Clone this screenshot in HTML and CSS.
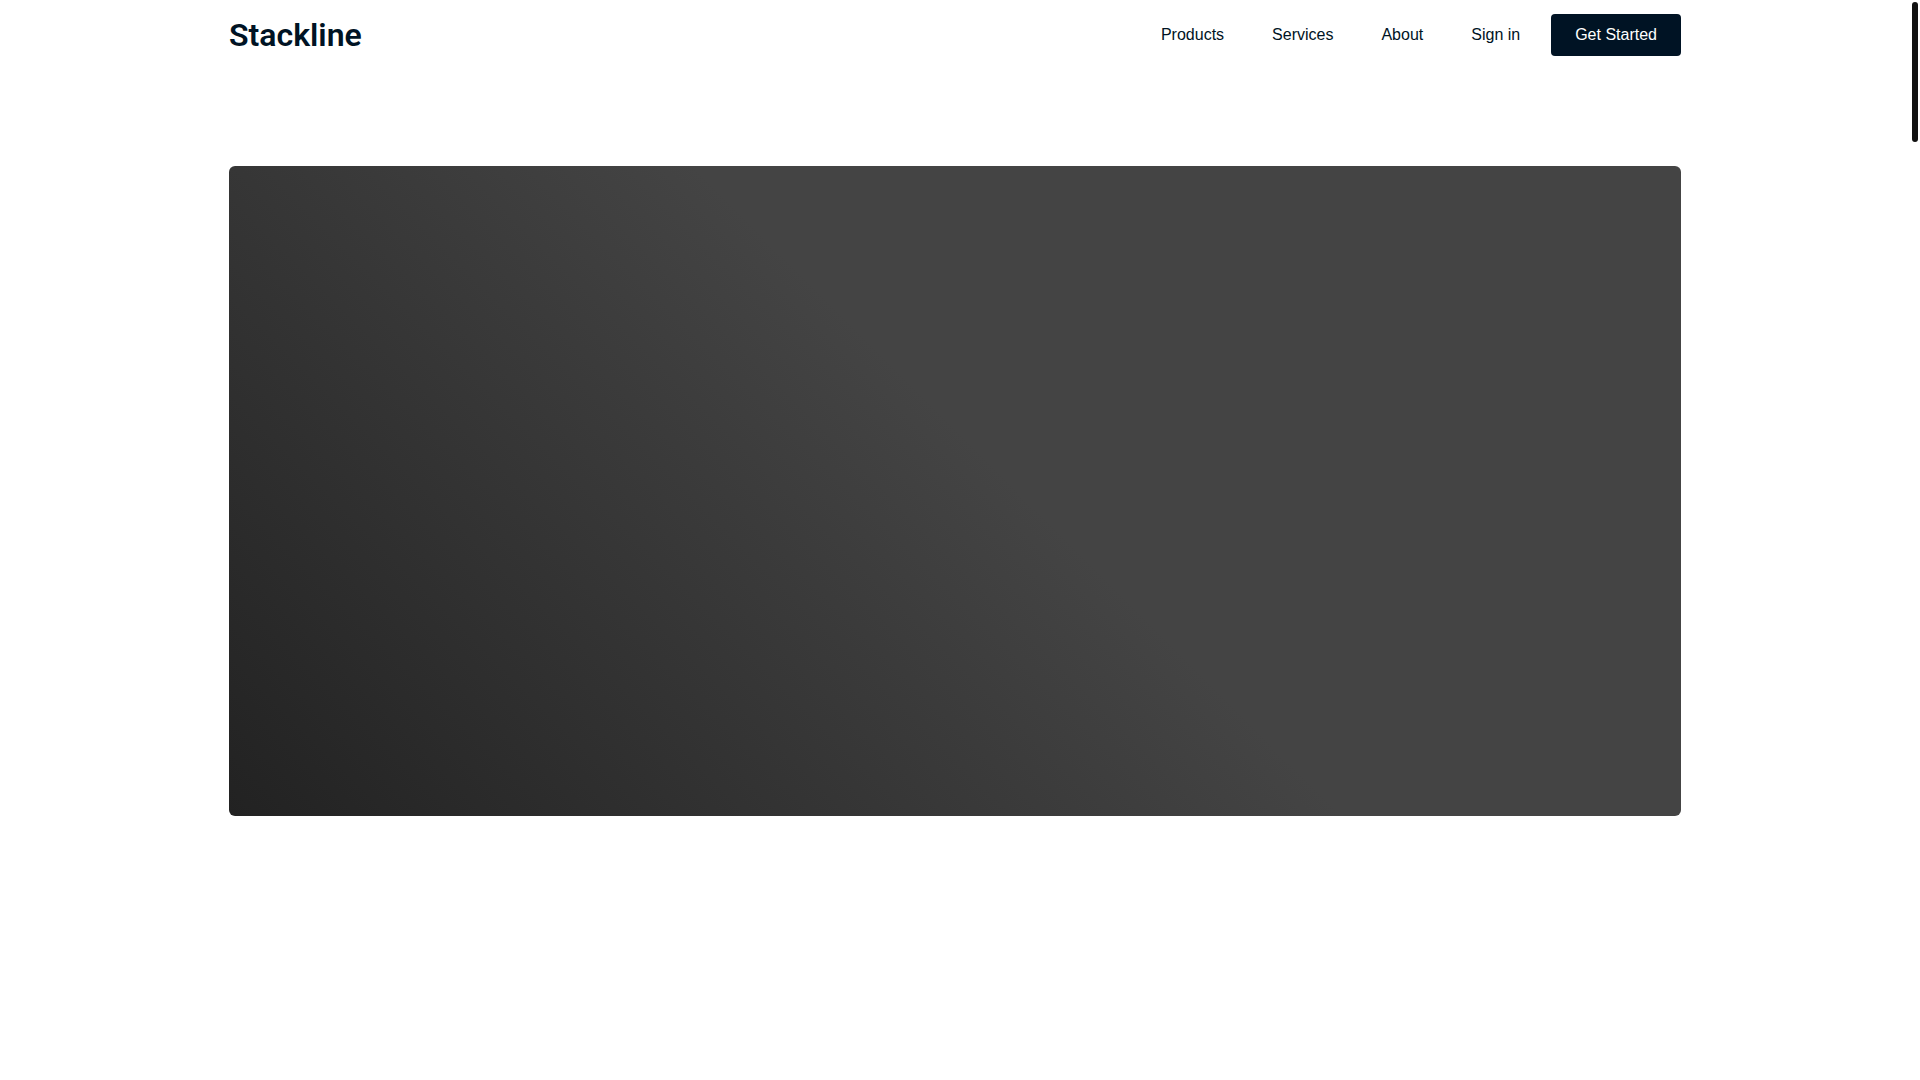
FILE: index.html
```html
<!DOCTYPE html>
<html lang="en">
<head>
    <meta charset="UTF-8">
    <meta name="viewport" content="width=device-width, initial-scale=1.0">
    <title>Stackline</title>
    <link rel="stylesheet" href="styles.css">
</head>
<body>
    <header class="header">
        <div class="container header-inner">
            <a class="logo" href="#">Stackline</a>
            <nav class="nav">
                <a class="nav-link" href="#">Products</a>
                <a class="nav-link" href="#">Services</a>
                <a class="nav-link" href="#">About</a>
                <a class="nav-link" href="#">Sign in</a>
                <button class="btn" type="button">Get Started</button>
            </nav>
        </div>
    </header>
    <main class="container">
        <section class="hero"></section>
    </main>
    <div class="scroll-thumb"></div>
</body>
</html>
```

FILE: styles.css
```css
* {
    box-sizing: border-box;
}
body {
    margin: 0;
    padding-right: 10px;
    background: #fff;
    color: #001324;
    font-family: "Liberation Sans", Arial, sans-serif;
    font-size: 16px;
}
a {
    color: inherit;
    text-decoration: none;
}
.container {
    width: calc(100% - 48px);
    max-width: 1452px;
    margin: 0 auto;
}
.header-inner {
    display: flex;
    align-items: center;
    justify-content: space-between;
    height: 70px;
}
.logo {
    font-family: Roboto, sans-serif;
    font-size: 32px;
    font-weight: 600;
    line-height: 40px;
}
.nav {
    display: flex;
    align-items: center;
}
.nav-link {
    padding: 12px 24px;
    line-height: 18px;
}
.nav-link:hover {
    text-decoration: underline;
}
.btn {
    margin-left: 7px;
    padding: 12px 24px;
    border: none;
    border-radius: 4px;
    background: #001324;
    color: #fff;
    font: inherit;
    line-height: 18px;
    cursor: pointer;
}

/* hero panel */
.hero {
    margin-top: 96px;
    height: 650px;
    border-radius: 6px;
    background: linear-gradient(45deg, #222, #444 53%);
}

/* page scroll indicator */
.scroll-thumb {
    position: fixed;
    top: 2px;
    right: 2px;
    width: 6px;
    height: 140px;
    border-radius: 3px;
    background: #111;
}
```
